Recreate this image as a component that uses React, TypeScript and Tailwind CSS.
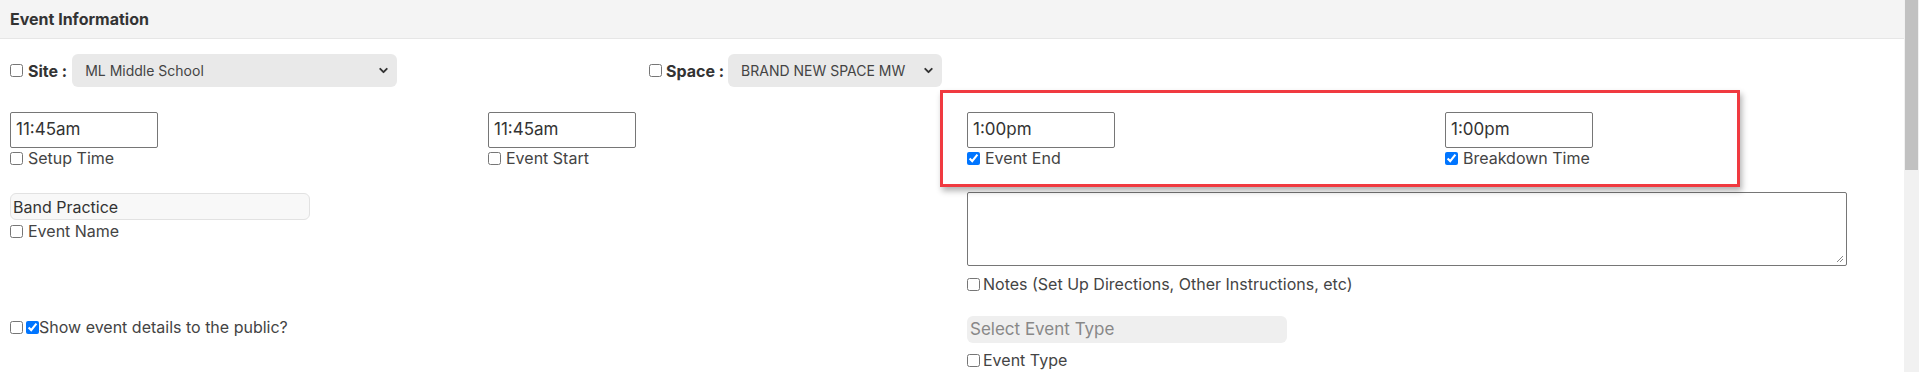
import { ChevronDown } from "lucide-react";

const font = { fontFamily: "Inter, 'Noto Sans', sans-serif" };

function Box({ checked = false }: { checked?: boolean }) {
  return (
    <input
      type="checkbox"
      readOnly
      defaultChecked={checked}
      className="m-0 h-[13px] w-[13px] shrink-0 accent-[#0075ff]"
    />
  );
}

function Caption({ text, checked = false }: { text: string; checked?: boolean }) {
  return (
    <label className="mt-[1px] flex h-[18px] items-center gap-[5px] text-[16px] leading-none text-[#444]">
      <Box checked={checked} />
      <span>{text}</span>
    </label>
  );
}

function TimeField({ value, label, checked = false }: { value: string; label: string; checked?: boolean }) {
  return (
    <div className="flex flex-col items-start">
      <div className="flex h-[36px] w-[148px] items-center rounded-[2px] border border-[#767676] px-[5px] text-[17px] text-[#333]">
        {value}
      </div>
      <Caption text={label} checked={checked} />
    </div>
  );
}

function FakeSelect({ value, width }: { value: string; width: string }) {
  return (
    <div
      className={`flex h-[33px] items-center justify-between rounded-[6px] bg-[#e9e9e9] pl-[13px] pr-[7px] text-[14px] text-[#444] ${width}`}
    >
      <span>{value}</span>
      <ChevronDown size={13} strokeWidth={3.5} className="text-[#333]" />
    </div>
  );
}

export default function App() {
  return (
    <div className="relative flex h-[372px] w-[1919px] overflow-hidden bg-white" style={font}>
      <div className="flex min-w-0 flex-1 flex-col">
        <div className="flex h-[39px] shrink-0 items-center border-b border-[#e6e6e6] bg-[#f4f4f4] px-[10px] text-[16px] font-bold text-[#333]">
          Event Information
        </div>

        <div className="pl-[10px]">
          <div className="grid grid-cols-[639px_639px_1fr] pt-[15px]">
            <div className="flex items-center">
              <Box />
              <span className="ml-[5px] mr-[5px] text-[16px] font-bold text-[#333]">Site :</span>
              <FakeSelect value="ML Middle School" width="w-[325px]" />
            </div>
            <div className="flex items-center">
              <Box />
              <span className="ml-[4px] mr-[4px] text-[16px] font-bold text-[#333]">Space :</span>
              <FakeSelect value="BRAND NEW SPACE MW" width="w-[214px]" />
            </div>
            <div />
          </div>

          <div className="mt-[25px] grid grid-cols-[478px_479px_478px_1fr]">
            <TimeField value="11:45am" label="Setup Time" />
            <TimeField value="11:45am" label="Event Start" />
            <TimeField value="1:00pm" label="Event End" checked />
            <TimeField value="1:00pm" label="Breakdown Time" checked />
          </div>

          <div className="mt-[25px] grid grid-cols-[957px_1fr]">
            <div className="flex flex-col items-start pt-[1px]">
              <div className="flex h-[27px] w-[300px] items-center rounded-[6px] border border-[#e2e2e2] bg-[#f8f8f8] px-[2px] text-[16px] text-[#333]">
                Band Practice
              </div>
              <label className="mt-[2px] flex h-[18px] items-center gap-[5px] text-[16px] leading-none text-[#444]">
                <Box />
                <span>Event Name</span>
              </label>
            </div>
            <div className="flex flex-col items-start">
              <div className="relative h-[74px] w-[880px] rounded-[2px] border border-[#767676]">
                <svg className="absolute bottom-[2px] right-[2px]" width="8" height="8" viewBox="0 0 8 8">
                  <path d="M7 1 L1 7 M7 4 L4 7" stroke="#888" strokeWidth="1" />
                </svg>
              </div>
              <label className="mt-[8px] flex h-[20px] items-center gap-[3px] text-[16px] leading-none text-[#444]">
                <Box />
                <span>Notes (Set Up Directions, Other Instructions, etc)</span>
              </label>
            </div>
          </div>

          <div className="mt-[22px] grid grid-cols-[957px_1fr]">
            <div className="flex items-start pt-[1px]">
              <label className="flex h-[20px] items-center text-[16px] leading-none text-[#444]">
                <Box />
                <span className="ml-[3px]" />
                <Box checked />
                <span>Show event details to the public?</span>
              </label>
            </div>
            <div className="flex flex-col items-start">
              <div className="flex h-[27px] w-[320px] items-center rounded-[6px] bg-[#efefef] px-[3px] text-[17px] text-[#888]">
                Select Event Type
              </div>
              <label className="mt-[7px] flex h-[20px] items-center gap-[3px] text-[16px] leading-none text-[#444]">
                <Box />
                <span>Event Type</span>
              </label>
            </div>
          </div>
        </div>
      </div>

      <div className="w-[15px] shrink-0 bg-[#f1f1f1] pl-[1px] pr-[1px]">
        <div className="h-[170px] w-full bg-[#c1c1c1]" />
      </div>

      <div className="pointer-events-none absolute left-[940px] top-[90px] h-[97px] w-[800px] border-[3px] border-[#f03a40] shadow-[2px_4px_6px_rgba(0,0,0,0.3)]" />
    </div>
  );
}
